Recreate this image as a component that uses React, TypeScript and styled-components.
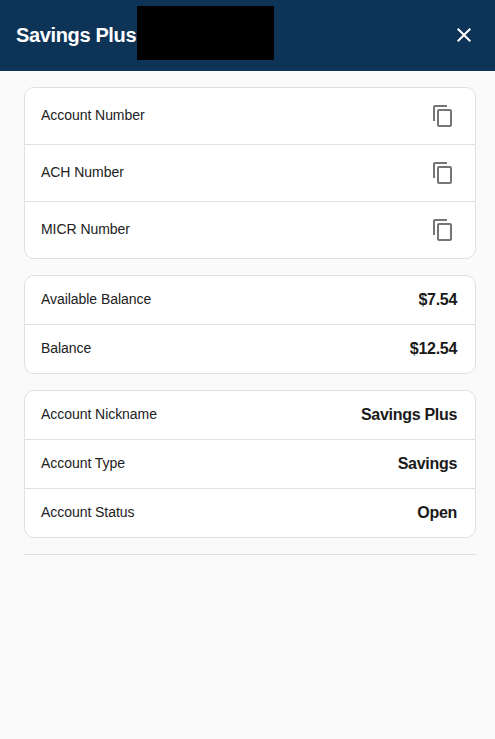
import React from "react";
import styled, { createGlobalStyle } from "styled-components";

const Global = createGlobalStyle`
  html, body { margin: 0; padding: 0; background: #fafafa; }
  body { font-family: "Liberation Sans", Arial, sans-serif; }
`;

const Page = styled.div`
  min-height: 739px;
  background: #fafafa;
  color: #212121;
`;

const Header = styled.header`
  height: 71px;
  box-sizing: border-box;
  background: #0d3357;
  display: flex;
  align-items: center;
  padding: 0 19px 0 16px;
  color: #fff;
`;

const Title = styled.h1`
  margin: -2px 0 0;
  font-size: 20px;
  font-weight: 700;
  letter-spacing: -0.36px;
  line-height: 1;
  white-space: nowrap;
`;

const Redaction = styled.div`
  width: 137px;
  height: 54px;
  margin-left: 1px;
  margin-top: -5px;
  background: #000;
`;

const CloseButton = styled.button`
  margin-left: auto;
  margin-top: -1px;
  width: 24px;
  height: 24px;
  padding: 0;
  border: 0;
  background: none;
  color: #fff;
  display: flex;
`;

const Content = styled.main`
  padding: 16px 19px 0 24px;
  display: flex;
  flex-direction: column;
  gap: 16px;
`;

const Card = styled.section`
  background: #fff;
  border: 1px solid #e0e0e0;
  border-radius: 10px;
`;

const Row = styled.div<{ $tall?: boolean }>`
  height: ${(p) => (p.$tall ? 57 : 49)}px;
  box-sizing: border-box;
  display: flex;
  align-items: center;
  justify-content: space-between;
  padding: 0 18px 0 16px;
  border-top: 1px solid #e0e0e0;
  &:first-child {
    border-top: 0;
    height: ${(p) => (p.$tall ? 56 : 48)}px;
  }
`;

const Label = styled.span`
  font-size: 14px;
  letter-spacing: -0.05px;
  padding-bottom: 2px;
  color: #212121;
`;

const Value = styled.span`
  font-size: 16px;
  font-weight: 700;
  letter-spacing: -0.3px;
  color: #1a1a1a;
`;

const CopyButton = styled.button`
  width: 24px;
  height: 24px;
  padding: 0;
  margin-right: 2px;
  border: 0;
  background: none;
  color: #757575;
  display: flex;
`;

const Divider = styled.hr`
  margin: 0;
  border: 0;
  border-top: 1px solid #e0e0e0;
`;

const CopyIcon = () => (
  <svg width="24" height="24" viewBox="0 0 24 24" fill="currentColor" aria-hidden="true">
    <path d="M16 1H4c-1.1 0-2 .9-2 2v14h2V3h12V1zm3 4H8c-1.1 0-2 .9-2 2v14c0 1.1.9 2 2 2h11c1.1 0 2-.9 2-2V7c0-1.1-.9-2-2-2zm0 16H8V7h11v14z" />
  </svg>
);

const CloseIcon = () => (
  <svg width="24" height="24" viewBox="0 0 24 24" fill="currentColor" aria-hidden="true">
    <path d="M19 6.41 17.59 5 12 10.59 6.41 5 5 6.41 10.59 12 5 17.59 6.41 19 12 13.41 17.59 19 19 17.59 13.41 12z" />
  </svg>
);

const numbers = ["Account Number", "ACH Number", "MICR Number"];
const balances = [
  ["Available Balance", "$7.54"],
  ["Balance", "$12.54"],
];
const details = [
  ["Account Nickname", "Savings Plus"],
  ["Account Type", "Savings"],
  ["Account Status", "Open"],
];

export default function App() {
  return (
    <Page>
      <Global />
      <Header>
        <Title>Savings Plus</Title>
        <Redaction />
        <CloseButton aria-label="Close">
          <CloseIcon />
        </CloseButton>
      </Header>
      <Content>
        <Card>
          {numbers.map((n) => (
            <Row $tall key={n}>
              <Label>{n}</Label>
              <CopyButton aria-label={`Copy ${n}`}>
                <CopyIcon />
              </CopyButton>
            </Row>
          ))}
        </Card>
        <Card>
          {balances.map(([l, v]) => (
            <Row key={l}>
              <Label>{l}</Label>
              <Value>{v}</Value>
            </Row>
          ))}
        </Card>
        <Card>
          {details.map(([l, v]) => (
            <Row key={l}>
              <Label>{l}</Label>
              <Value>{v}</Value>
            </Row>
          ))}
        </Card>
        <Divider />
      </Content>
    </Page>
  );
}
